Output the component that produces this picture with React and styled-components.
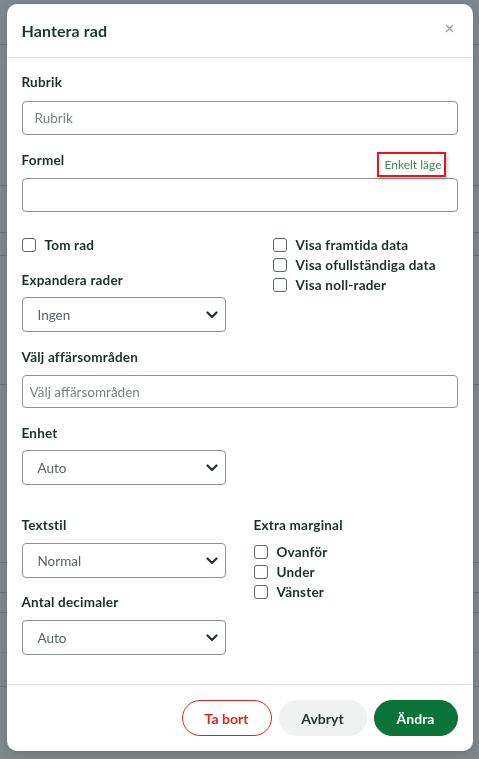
import React from "react";
import styled, { createGlobalStyle } from "styled-components";

const GlobalStyle = createGlobalStyle`
  html, body {
    margin: 0;
    padding: 0;
    height: 100%;
    overflow: hidden;
    background: #ffffff;
    font-family: Lato, "Noto Sans", sans-serif;
  }
  * { box-sizing: border-box; }
`;

const INK = "#1c2f27";

const Page = styled.div`
  display: flex;
  flex-direction: column;
`;

const PageRow = styled.div`
  height: ${(p) => p.h}px;
  border-bottom: 1px ${(p) => (p.dotted ? "dotted" : "solid")} #cfd4d6;
`;

const Overlay = styled.div`
  position: fixed;
  inset: 0;
  background: rgba(40, 55, 63, 0.6);
  display: flex;
  justify-content: center;
  align-items: flex-start;
  padding-top: 4px;
`;

const Modal = styled.div`
  width: 466px;
  height: 747px;
  background: #fff;
  border-radius: 10px;
  display: flex;
  flex-direction: column;
  color: ${INK};
  box-shadow: 0 2px 8px rgba(0, 0, 0, 0.15);
`;

const Header = styled.div`
  height: 54px;
  flex-shrink: 0;
  padding: 0 15px;
  display: flex;
  align-items: center;
  justify-content: space-between;
  border-bottom: 1px solid #dfe3e4;
`;

const Title = styled.h2`
  margin: 0;
  font-size: 16px;
  font-weight: 700;
  letter-spacing: 0.1px;
  color: #1d3a2f;
`;

const Close = styled.button`
  border: none;
  background: none;
  padding: 0;
  width: 14px;
  height: 14px;
  display: flex;
  align-items: center;
  justify-content: center;
  margin-top: -5px;
  margin-right: 1px;
  cursor: pointer;
`;

const Body = styled.div`
  flex: 1;
  padding: 15px 15px 0;
  border-bottom: 1px solid #dfe3e4;
`;

const Field = styled.div`
  margin-bottom: ${(p) => p.mb ?? 16}px;
`;

const Label = styled.div`
  font-size: 13.5px;
  letter-spacing: 0.2px;
  font-weight: 700;
  line-height: 18px;
  margin-bottom: ${(p) => p.mb ?? 9}px;
`;

const LabelRow = styled.div`
  display: flex;
  justify-content: space-between;
  align-items: flex-start;
  margin-bottom: 1px;
`;

const ModeLink = styled.a`
  margin-top: 1px;
  height: 25px;
  padding: 0 2px 0 5px;
  display: flex;
  align-items: center;
  font-size: 12px;
  color: #3f8a5c;
  border: 2px solid #e3161b;
  box-shadow: 1px 2px 4px rgba(0, 0, 0, 0.25);
  margin-right: 12px;
`;

const Input = styled.input`
  display: block;
  width: 100%;
  height: ${(p) => p.h ?? 34}px;
  border: 1px solid #8d9396;
  border-radius: 4px;
  padding: 0 ${(p) => p.pl ?? 12}px;
  font-family: inherit;
  font-size: 13.5px;
  color: ${INK};
  outline: none;
  &::placeholder { color: #7b8286; }
`;

const SelectBox = styled.div`
  width: 204px;
  height: 35px;
  border: 1px solid #8d9396;
  border-radius: 4px;
  padding: 0 7px 0 15px;
  display: flex;
  align-items: center;
  justify-content: space-between;
  font-size: 13.5px;
  color: #5a6266;
`;

const Columns = styled.div`
  display: grid;
  grid-template-columns: ${(p) => p.left}px 1fr;
`;

const CheckRow = styled.label`
  display: flex;
  align-items: center;
  height: 20px;
  gap: 9px;
  font-size: 13.5px;
  letter-spacing: 0.2px;
  font-weight: 700;
  color: ${INK};
`;

const Box = styled.span`
  width: 14px;
  height: 14px;
  border: 1.3px solid #5c6569;
  border-radius: 3px;
  background: #fff;
`;

const Footer = styled.div`
  height: 66px;
  flex-shrink: 0;
  padding: 15px 15px 0;
  display: flex;
  justify-content: flex-end;
  gap: 7px;
`;

const Button = styled.button`
  height: 36px;
  min-width: ${(p) => p.w}px;
  border-radius: 18px;
  font-family: inherit;
  font-size: 14px;
  font-weight: 700;
  cursor: pointer;
  border: 1px solid
    ${(p) => (p.variant === "danger" ? "#d7281e" : p.variant === "primary" ? "#0a7338" : "#f0f2f1")};
  background: ${(p) => (p.variant === "primary" ? "#0a7338" : p.variant === "danger" ? "#fff" : "#f0f2f1")};
  color: ${(p) => (p.variant === "primary" ? "#fff" : p.variant === "danger" ? "#d7281e" : "#27342e")};
`;

const Chevron = () => (
  <svg width="12" height="8" viewBox="0 0 12 8">
    <polyline points="1.5,1.5 6,6 10.5,1.5" fill="none" stroke="#2a3530" strokeWidth="2.3" strokeLinecap="round" strokeLinejoin="round" />
  </svg>
);

const Select = ({ value }) => (
  <SelectBox>
    <span>{value}</span>
    <Chevron />
  </SelectBox>
);

const Check = ({ children }) => (
  <CheckRow>
    <Box />
    {children}
  </CheckRow>
);

const pageRows = [
  { h: 45 }, { h: 141 }, { h: 47 }, { h: 23 }, { h: 129 },
  { h: 178 }, { h: 30 }, { h: 20 }, { h: 40, dotted: true }, { h: 34 },
];

export default function App() {
  return (
    <>
      <GlobalStyle />
      <Page>
        {pageRows.map((r, i) => (
          <PageRow key={i} h={r.h} dotted={r.dotted} />
        ))}
      </Page>
      <Overlay>
        <Modal>
          <Header>
            <Title>Hantera rad</Title>
            <Close aria-label="Stäng">
              <svg width="9" height="9" viewBox="0 0 9 9">
                <path d="M1 1L8 8M8 1L1 8" stroke="#9aa2a5" strokeWidth="1.2" />
              </svg>
            </Close>
          </Header>
          <Body>
            <Field mb={16}>
              <Label mb={10}>Rubrik</Label>
              <Input placeholder="Rubrik" />
            </Field>
            <Field mb={23}>
              <LabelRow>
                <Label mb={0}>Formel</Label>
                <ModeLink>Enkelt läge</ModeLink>
              </LabelRow>
              <Input />
            </Field>
            <Columns left={251}>
              <div>
                <Check>Tom rad</Check>
                <Field mb={16} />
                <Field>
                  <Label mb={8}>Expandera rader</Label>
                  <Select value="Ingen" />
                </Field>
              </div>
              <div>
                <Check>Visa framtida data</Check>
                <Check>Visa ofullständiga data</Check>
                <Check>Visa noll-rader</Check>
              </div>
            </Columns>
            <Field>
              <Label>Välj affärsområden</Label>
              <Input placeholder="Välj affärsområden" pl={7} h={33} />
            </Field>
            <Field mb={31}>
              <Label mb={8}>Enhet</Label>
              <Select value="Auto" />
            </Field>
            <Columns left={232}>
              <div>
                <Field mb={15}>
                  <Label>Textstil</Label>
                  <Select value="Normal" />
                </Field>
                <Field>
                  <Label>Antal decimaler</Label>
                  <Select value="Auto" />
                </Field>
              </div>
              <div>
                <Label mb={8}>Extra marginal</Label>
                <Check>Ovanför</Check>
                <Check>Under</Check>
                <Check>Vänster</Check>
              </div>
            </Columns>
          </Body>
          <Footer>
            <Button variant="danger" w={90}>Ta bort</Button>
            <Button w={88}>Avbryt</Button>
            <Button variant="primary" w={84}>Ändra</Button>
          </Footer>
        </Modal>
      </Overlay>
    </>
  );
}
